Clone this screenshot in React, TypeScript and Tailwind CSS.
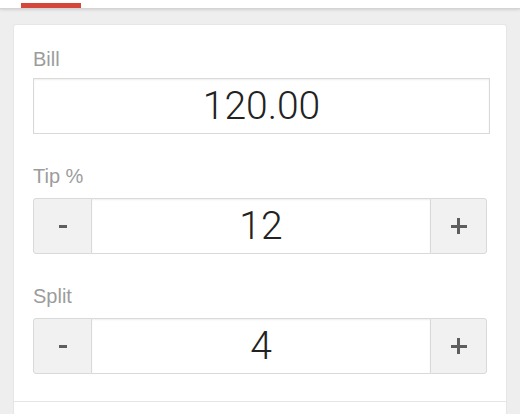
import React from "react";

const font = { fontFamily: '"Liberation Sans", Arial, sans-serif' };
const numFont = { fontFamily: 'Roboto, "Liberation Sans", Arial, sans-serif' };

function Label({ children, first = false }: { children: React.ReactNode; first?: boolean }) {
  return (
    <div
      className={
        first
          ? "text-[20px] leading-[24px] text-[#9c9c9c] pt-[3px] mb-[7px]"
          : "text-[20px] leading-[24px] text-[#9c9c9c] mb-[10px]"
      }
    >
      {children}
    </div>
  );
}

function Minus() {
  return <span className="block w-[8px] h-[3px] bg-[#5e5e5e]" />;
}

function Plus() {
  return (
    <span className="relative block w-[16px] h-[16px]">
      <span className="absolute left-0 top-[6.5px] w-[16px] h-[3px] bg-[#5e5e5e]" />
      <span className="absolute top-0 left-[6.5px] w-[3px] h-[16px] bg-[#5e5e5e]" />
    </span>
  );
}

function Stepper({ value }: { value: string }) {
  return (
    <div className="flex h-[56px] w-full">
      <button className="w-[59px] shrink-0 flex items-center justify-center bg-[#f1f1f1] border border-[#d9d9d9] rounded-l-[3px]">
        <Minus />
      </button>
      <div
        style={numFont}
        className="flex-1 flex items-center justify-center bg-white border-y border-[#d9d9d9] shadow-[inset_0_1px_2px_rgba(0,0,0,0.07)] text-[39px] font-light text-[#222] leading-none"
      >
        {value}
      </div>
      <button className="w-[57px] shrink-0 flex items-center justify-center bg-[#f1f1f1] border border-[#d9d9d9] rounded-r-[3px]">
        <Plus />
      </button>
    </div>
  );
}

export default function App() {
  return (
    <div style={font} className="h-[414px] w-[520px] overflow-hidden bg-[#eeeeee]">
      <div className="h-[9px] bg-white border-b border-[#d4d4d4] shadow-[0_1px_3px_rgba(0,0,0,0.12)] pl-[21px] pt-[3px]">
        <div className="w-[60px] h-[5px] bg-[#d5473a]" />
      </div>
      <div className="mx-[13px] mt-[15px] bg-white rounded-[3px] border border-[#e6e6e6] border-b-0">
        <div className="px-[19px] pt-[19px] pb-[27px]">
          <Label first>Bill</Label>
          <div
            style={numFont}
            className="mr-[-3px] h-[56px] flex items-center justify-center border border-[#d9d9d9] shadow-[inset_0_1px_2px_rgba(0,0,0,0.07)] text-[39px] font-light text-[#222] leading-none"
          >
            120.00
          </div>
          <div className="h-[30px]" />
          <Label>Tip %</Label>
          <Stepper value="12" />
          <div className="h-[30px]" />
          <Label>Split</Label>
          <Stepper value="4" />
        </div>
        <div className="border-t border-[#e4e4e4] h-[60px]" />
      </div>
    </div>
  );
}
